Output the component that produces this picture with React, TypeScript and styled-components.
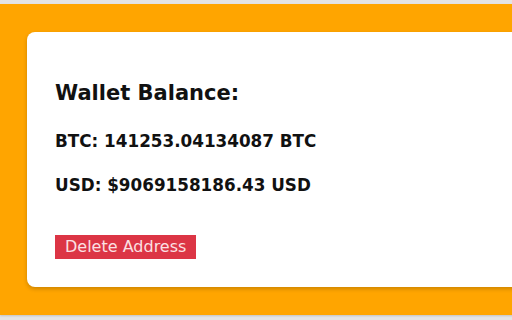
import React from "react";
import styled, { createGlobalStyle } from "styled-components";

const Global = createGlobalStyle`
  html, body {
    margin: 0;
    padding: 0;
    background: #e4e4e4;
    overflow: hidden;
    font-family: "DejaVu Sans", sans-serif;
  }
`;

const Page = styled.div`
  padding-top: 4px;
  width: 512px;
  height: 320px;
  box-sizing: border-box;
  overflow: hidden;
`;

const Band = styled.section`
  background: #ffa500;
  padding: 28px 0 28px 27px;
  margin-right: -200px;
  box-shadow: 0 1px 2px rgba(0, 0, 0, 0.15);
`;

const Card = styled.div`
  background: #ffffff;
  border-radius: 8px;
  box-shadow: 0 2px 4px rgba(0, 0, 0, 0.2);
  padding: 49px 28px 28px 28px;
  height: 255px;
  box-sizing: border-box;
  display: flex;
  flex-direction: column;
  align-items: flex-start;
`;

const Title = styled.h3`
  margin: 0;
  font-size: 21px;
  font-weight: bold;
  color: #111;
`;

const Line = styled.p<{ $gap: number }>`
  margin: ${(p) => p.$gap}px 0 0 0;
  font-size: 16.8px;
  font-weight: bold;
  color: #111;
`;

const DeleteButton = styled.button`
  margin-top: 40px;
  background: #dc3545;
  color: #fbe0e3;
  border: none;
  border-radius: 0;
  font-family: "DejaVu Sans", sans-serif;
  font-size: 16px;
  padding: 2px 10px 3px 10px;
  cursor: pointer;
`;

export default function App() {
  return (
    <>
      <Global />
      <Page>
        <Band>
          <Card>
            <Title>Wallet Balance:</Title>
            <Line $gap={26}>BTC: 141253.04134087 BTC</Line>
            <Line $gap={24}>USD: $9069158186.43 USD</Line>
            <DeleteButton>Delete Address</DeleteButton>
          </Card>
        </Band>
      </Page>
    </>
  );
}
